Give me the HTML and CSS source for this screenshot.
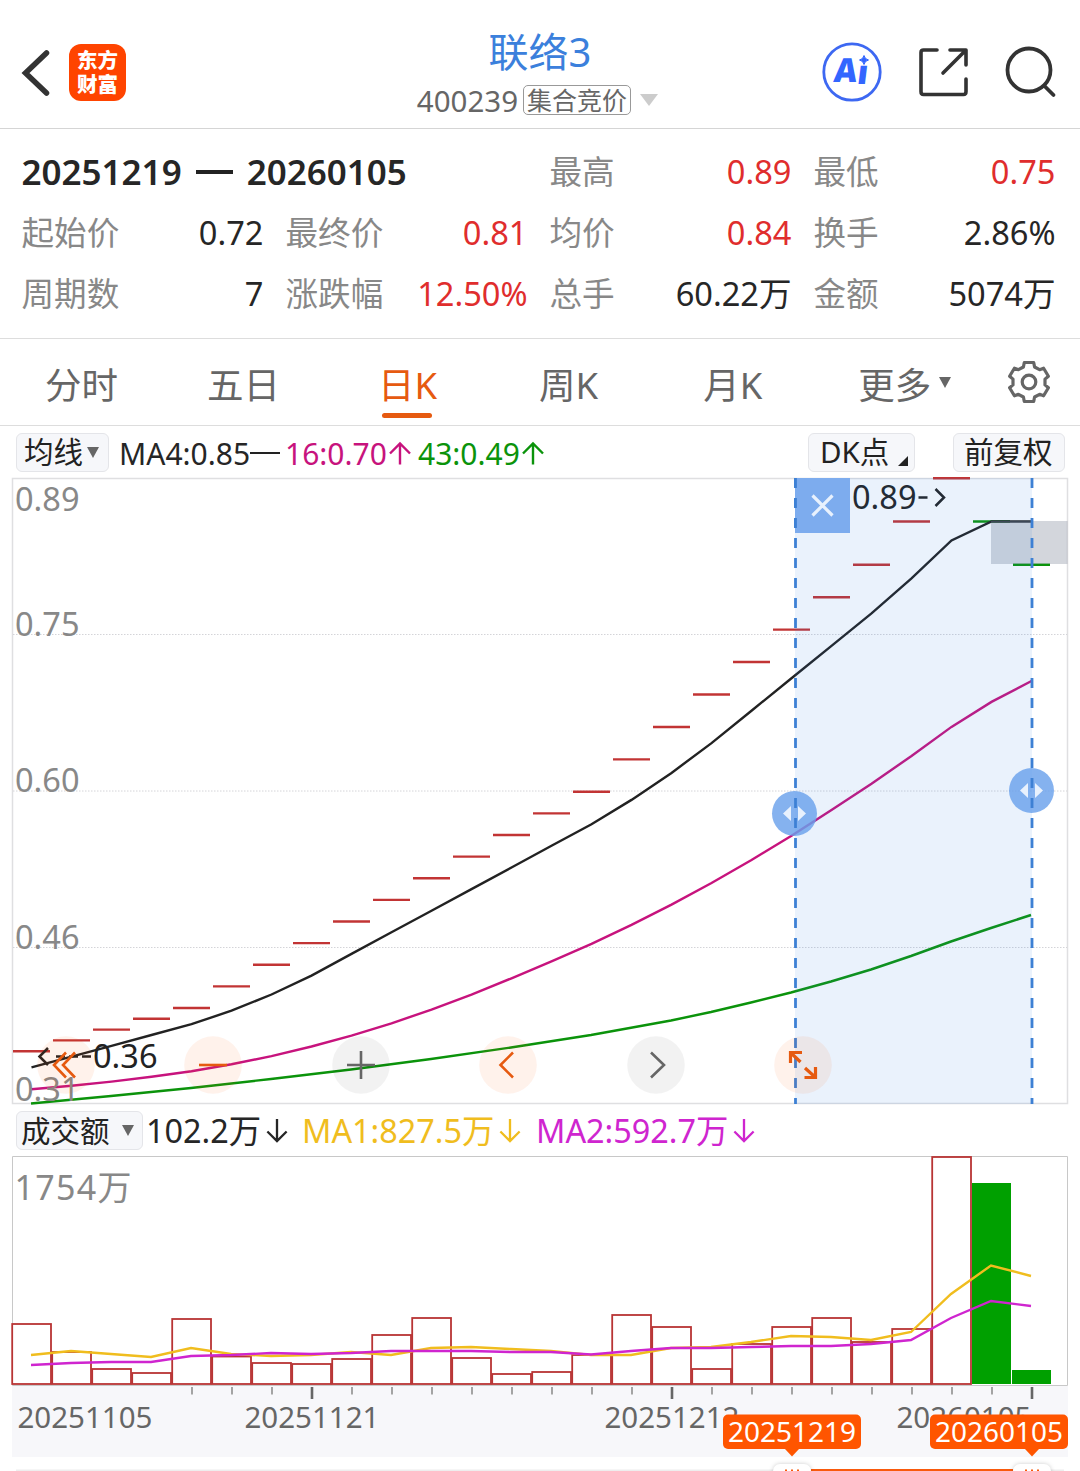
FILE: index.html
```html
<!DOCTYPE html>
<html lang="zh-CN">
<head>
    <meta charset="UTF-8">
    <meta name="viewport" content="width=device-width, initial-scale=1.0">
    <title>联络3 400239</title>
    <link rel="stylesheet" href="styles.css">
</head>
<body>
    <!-- Header -->
    <header class="header">
        <div class="header-left">
            <svg class="back" width="30" height="50" viewBox="0 0 30 50">
                <path d="M25.500 5 L4.500 25 L25.500 45" fill="none" stroke="#333" stroke-width="5.500" stroke-linecap="round"/>
            </svg>
            <div class="logo"><span>东方</span><span>财富</span></div>
        </div>
        <div class="header-title">
            <h1>联络3</h1>
            <div class="code">400239<span class="badge">集合竞价</span><i class="caret-light"></i></div>
        </div>
        <div class="header-right">
            <svg class="ai-icon" width="60" height="60" viewBox="0 0 60 60">
                <circle cx="30" cy="30" r="28.2" fill="none" stroke="#3d68f2" stroke-width="2.8"/>
                <g transform="translate(5 0) skewX(-7)">
                    <text class="ai" x="11" y="40.500" textLength="23" lengthAdjust="spacingAndGlyphs">A</text>
                    <text class="ai" x="34.500" y="42">ı</text>
                </g>
                <path d="M42 13.500 Q42.800 17.200 46.500 18 Q42.800 18.800 42 22.500 Q41.200 18.800 37.500 18 Q41.200 17.200 42 13.500Z" fill="#3366ff" stroke="#3366ff"/>
            </svg>
            <svg width="52" height="52" viewBox="0 0 52 52" fill="none" stroke="#333" stroke-width="3.600" stroke-linecap="round" stroke-linejoin="round">
                <path d="M19 4 H5.500 Q3 4 3 6.500 V45.500 Q3 48.500 5.500 48.500 H45.500 Q48 48.500 48 45.500 V33"/>
                <path d="M32 4 H48 V19 M47 5 L25 27"/>
            </svg>
            <svg width="52" height="52" viewBox="0 0 52 52" fill="none" stroke="#333" stroke-width="3.800" stroke-linecap="round">
                <circle cx="24" cy="24" r="21.500"/>
                <path d="M39.500 40 L48.500 49"/>
            </svg>
        </div>
    </header>

    <!-- Range statistics -->
    <section class="stats">
        <div class="range">20251219<i></i>20260105</div>
        <div class="stat"><span>最高</span><b class="red">0.89</b></div>
        <div class="stat"><span>最低</span><b class="red">0.75</b></div>
        <div class="stat"><span>起始价</span><b>0.72</b></div>
        <div class="stat"><span>最终价</span><b class="red">0.81</b></div>
        <div class="stat"><span>均价</span><b class="red">0.84</b></div>
        <div class="stat"><span>换手</span><b>2.86%</b></div>
        <div class="stat"><span>周期数</span><b>7</b></div>
        <div class="stat"><span>涨跌幅</span><b class="red">12.50%</b></div>
        <div class="stat"><span>总手</span><b>60.22万</b></div>
        <div class="stat"><span>金额</span><b>5074万</b></div>
    </section>

    <!-- Period tabs -->
    <nav class="tabs">
        <a>分时</a>
        <a>五日</a>
        <a class="active">日K</a>
        <a>周K</a>
        <a>月K</a>
        <a>更多<i class="caret"></i></a>
        <svg class="gear" width="46" height="46" viewBox="-23 -23 46 46" fill="none" stroke="#666" stroke-width="3.200" stroke-linejoin="round">
            <path d="M-4.700 -19.500 H4.700 L5.600 -15 L10.600 -12.300 L14.600 -13.800 L19.400 -5.800 L16 -2.900 V2.900 L19.400 5.800 L14.600 13.800 L10.600 12.300 L5.600 15 L4.700 19.500 H-4.700 L-5.600 15 L-10.600 12.300 L-14.600 13.800 L-19.400 5.800 L-16 2.900 V-2.900 L-19.400 -5.800 L-14.600 -13.800 L-10.600 -12.300 L-5.600 -15Z"/>
            <circle r="6.800"/>
        </svg>
    </nav>

    <!-- Moving averages -->
    <div class="toolbar">
        <button class="chip ma-chip">均线<i class="caret"></i></button>
        <span class="ma ma4">MA4:0.85<i class="flat"></i></span>
        <span class="ma ma16">16:0.70<svg class="arrow" viewBox="0 0 24 24"><path d="M12 23 V2 M2 12 L12 2 L22 12"/></svg></span>
        <span class="ma ma43">43:0.49<svg class="arrow" viewBox="0 0 24 24"><path d="M12 23 V2 M2 12 L12 2 L22 12"/></svg></span>
        <button class="chip dk-chip">DK点<i class="corner"></i></button>
        <button class="chip fq-chip">前复权</button>
    </div>

    <!-- Price chart -->
    <svg class="chart" width="1080" height="632" viewBox="0 474 1080 632">
        <path d="M12.500 478.500 H1067.500 V1103.500 H12.500Z" fill="none" stroke="#dfdfe1" stroke-width="1.500"/>
        <path d="M13 634.500 H1067 M13 791 H1067 M13 947.500 H1067" stroke="#d4d4d8" stroke-dasharray="1.500 1.500"/>
        <g id="candles"></g>
        <polyline id="ma4" class="line" stroke="#222"/>
        <polyline id="ma16" class="line" stroke="#c7137d"/>
        <polyline class="line" stroke="#0b930b" points="31,1103.500 111,1096 191,1088 271,1079 351,1069.500 431,1059 511,1047.500 591,1035 671,1020.500 711,1012 751,1002.500 791,992.500 831,981.500 871,969.500 911,956 951,941.500 991,928 1031,915"/>
        <g class="axis-label">
            <text x="15" y="511">0.89</text>
            <text x="15" y="636">0.75</text>
            <text x="15" y="792">0.60</text>
            <text x="15" y="949">0.46</text>
            <text x="15" y="1100.500">0.31</text>
        </g>
        <g class="mark">
            <text x="93" y="1068">0.36</text>
            <path d="M48 1048 L39.500 1056.500 L48 1065 M56 1056.500 h9 M69 1056.500 h9 M82 1056.500 h9"/>
            <text x="852" y="508.500">0.89</text>
            <path d="M918.500 497.500 h9 M935.500 489 L944 497.500 L935.500 506"/>
        </g>
        <rect x="991" y="521" width="76.500" height="43" fill="#7a8494" fill-opacity=".33"/>

        <!-- Selected range -->
        <rect x="795" y="478" width="237" height="626" fill="#2f7fdf" fill-opacity=".1"/>
        <path d="M795.500 478 V1104 M1032 478 V1104" stroke="#3d80d4" stroke-width="2.800" stroke-dasharray="10 10"/>
        <rect x="795" y="478" width="55" height="55" fill="#7dacee"/>
        <path d="M795.500 478 v10 m0 10 v10 m0 10 v10" stroke="#3d80d4" stroke-width="2.800"/>
        <path d="M812.500 495.500 L832.500 515.500 M832.500 495.500 L812.500 515.500" stroke="#e8f1fd" stroke-width="3.200"/>
        <g class="handle">
            <circle cx="794.500" cy="813.500" r="22.500"/>
            <path d="M791 806 V821 L783 813.500Z M798 806 V821 L806 813.500Z"/>
            <circle cx="1031.500" cy="790.500" r="22.500"/>
            <path d="M1028 783 V798 L1020 790.500Z M1035 783 V798 L1043 790.500Z"/>
        </g>
        <path d="M795.500 798 v10 m0 10 v10 M1032 778 v10 m0 10 v10" stroke="#3d80d4" stroke-width="2.600"/>

        <!-- Zoom and scroll buttons -->
        <g class="ctrl hot">
            <circle cx="66" cy="1065" r="28.800"/>
            <path d="M66 1052.500 L54 1065 L66 1077.500 M75 1052.500 L63 1065 L75 1077.500"/>
            <circle cx="213" cy="1065" r="28.800"/>
            <path d="M199 1065 h28"/>
            <circle cx="508" cy="1065" r="28.800"/>
            <path d="M513 1052.500 L500.500 1065 L513 1077.500"/>
            <circle cx="803" cy="1065" r="28.800"/>
            <path class="expand" d="M802 1052.500 H790.500 V1063 M791 1053 L800.500 1062 M805 1068 L815 1077 M815.500 1067 V1077.500 H804.500"/>
        </g>
        <g class="ctrl">
            <circle cx="361" cy="1065" r="28.800"/>
            <path d="M347 1065 h28 M361 1051 v28"/>
            <circle cx="656" cy="1065" r="28.800"/>
            <path d="M651 1052.500 L664 1065 L651 1077.500"/>
        </g>
    </svg>

    <!-- Turnover -->
    <div class="toolbar volume-bar">
        <button class="chip vol-chip">成交额<i class="caret"></i></button>
        <span class="vol">102.2万<svg class="arrow" viewBox="0 0 24 26"><path d="M12 1 V24 M2 14 L12 24 L22 14"/></svg></span>
        <span class="vol vol-ma1">MA1:827.5万<svg class="arrow" viewBox="0 0 24 26"><path d="M12 1 V24 M2 14 L12 24 L22 14"/></svg></span>
        <span class="vol vol-ma2">MA2:592.7万<svg class="arrow" viewBox="0 0 24 26"><path d="M12 1 V24 M2 14 L12 24 L22 14"/></svg></span>
    </div>

    <svg class="chart" width="1080" height="317" viewBox="0 1154 1080 317">
        <rect x="12" y="1386" width="1056" height="71" fill="#f7f7fa"/>
        <path d="M12.500 1156.500 H1067.500 V1385.500 H12.500Z" fill="#fff" stroke="#c8c8c8"/>
        <text class="axis-label volume-max" x="14.500" y="1200">1754万</text>
        <g id="bars"></g>
        <polyline class="line" stroke="#f0bd1e" points="31,1355 71,1351 111,1354 151,1357 191,1348 231,1354 271,1356 311,1355 351,1352 391,1355 431,1348 471,1347 511,1349 551,1351 591,1355 631,1355 671,1348 711,1347 751,1342 791,1336 831,1337 871,1340 911,1332 951,1294 991,1265.500 1031,1276"/>
        <polyline class="line" stroke="#cf25cf" points="31,1365 71,1363 111,1362 151,1362 191,1356 231,1355 271,1353 311,1354 351,1353 391,1351 431,1351 471,1351 511,1352 551,1352 591,1354.500 631,1351 671,1348 711,1348 751,1347 791,1346 831,1346 871,1344 911,1340 951,1318 991,1301 1031,1306"/>
        <g id="ticks"></g>
        <g class="date">
            <text x="17.500" y="1427.500">20251105</text>
            <text x="244.500" y="1427.500">20251121</text>
            <text x="604.500" y="1427.500">20251212</text>
            <text x="896.500" y="1427.500">20260105</text>
        </g>

        <!-- Range slider -->
        <path d="M16 1470.500 H1064" stroke="#eee" stroke-width="2"/>
        <path d="M811 1470.500 H1013" stroke="#f95a0d" stroke-width="3"/>
        <g class="grip">
            <rect x="773" y="1464" width="38" height="20" rx="7"/>
            <rect x="1013" y="1464" width="38" height="20" rx="7"/>
        </g>
        <path d="M786 1469.500 v2 M792 1469.500 v2 M798 1469.500 v2 M1026 1469.500 v2 M1032 1469.500 v2 M1038 1469.500 v2" stroke="#f95a0d" stroke-width="2"/>
        <g class="flag">
            <rect x="723" y="1414.500" width="138" height="34.500" rx="5"/>
            <path d="M785 1449 H799 L792 1456.500Z"/>
            <text x="728" y="1441.500">20251219</text>
            <rect x="930" y="1414.500" width="138" height="34.500" rx="5"/>
            <path d="M1025 1449 H1039 L1032 1456.500Z"/>
            <text x="935" y="1441.500">20260105</text>
        </g>
    </svg>

    <script>
        // Prices before the first visible day are only used for the averages
        const history = Array(12).fill(0.318).concat([0.33, 0.34, 0.35]);
        const prices = [
            0.36, 0.37, 0.38, 0.39, 0.40, 0.42, 0.44, 0.46, 0.48, 0.50, 0.52, 0.54, 0.56,
            0.58, 0.60, 0.63, 0.66, 0.69, 0.72, 0.75, 0.78, 0.81, 0.85, 0.89, 0.85, 0.81
        ];
        // Top edge of each turnover bar
        const volumes = [
            1324, 1352, 1369, 1373, 1319, 1356.5, 1363, 1364, 1359, 1335, 1318, 1358, 1374,
            1372, 1355, 1315, 1327, 1369, 1344, 1327, 1318, 1342, 1329, 1157, 1183, 1370
        ];
        const all = history.concat(prices);

        function priceY(p) {
            return 478.3 + (0.89 - p) * 1081;
        }

        function average(n) {
            return prices.map((_, i) => {
                const end = i + history.length + 1;
                const sum = all.slice(end - n, end).reduce((a, b) => a + b, 0);
                return `${31.5 + i * 40},${priceY(sum / n).toFixed(1)}`;
            }).join(' ');
        }

        document.getElementById('ma4').setAttribute('points', average(4));
        document.getElementById('ma16').setAttribute('points', average(16));

        document.getElementById('candles').innerHTML = prices.map((p, i) => {
            const color = i > 23 ? '#0b930b' : '#c23434';
            return `<path d="M${13 + i * 40} ${priceY(p)} h37" stroke="${color}" stroke-width="2.4"/>`;
        }).join('');

        document.getElementById('bars').innerHTML = volumes.map((y, i) => {
            const x = 12 + i * 40;
            if (i > 23) {
                return `<rect x="${x}" y="${y}" width="39" height="${1384 - y}" fill="#00a000"/>`;
            }
            return `<rect x="${x + 0.2}" y="${y}" width="38.800" height="${1384 - y}" fill="none" stroke="#b83434" stroke-width="1.800"/>`;
        }).join('');

        let ticks = '';
        for (let i = 4; i < 26; i++) {
            const major = i === 7 || i === 16 || i === 25;
            ticks += `<path d="M${32 + i * 40} 1387 v${major ? 12 : 7.5}" stroke="${major ? '#666' : '#999'}" stroke-width="${major ? 2.6 : 1.8}"/>`;
        }
        document.getElementById('ticks').innerHTML = ticks;
    </script>
</body>
</html>
```

FILE: styles.css
```css
/* General styles */
* {
    box-sizing: border-box;
}

body {
    margin: 0;
    width: 1080px;
    height: 1471px;
    overflow: hidden;
    background-color: #fff;
    color: #262626;
    font-family: "Noto Sans", "Noto Sans CJK SC", sans-serif;
}

.red {
    color: #e02d2d;
}

/* Header */
.header {
    display: grid;
    grid-template-columns: 300px 1fr 300px;
    height: 129px;
    border-bottom: 1px solid #d5d5d5;
}

.header-left {
    display: flex;
    align-items: center;
    gap: 18px;
    height: 145px;
    padding-left: 21px;
}

.logo {
    display: flex;
    flex-direction: column;
    align-items: center;
    justify-content: center;
    width: 57px;
    height: 57px;
    padding-bottom: 2px;
    border-radius: 12px;
    background-color: #ff4400;
    color: #fff;
    font-size: 20.5px;
    font-weight: 900;
    line-height: 24px;
}

.header-title {
    display: flex;
    flex-direction: column;
    align-items: center;
    padding-top: 27px;
}

.header-title h1 {
    margin: 0;
    color: #3b80dc;
    font-size: 40px;
    font-weight: 400;
    line-height: 50px;
}

.code {
    display: flex;
    align-items: center;
    height: 48px;
    margin: -1px 0 0 -5px;
    color: #666;
    font-size: 29.5px;
}

.badge {
    height: 30px;
    margin-left: 5px;
    padding: 0 3px;
    border: 1.5px solid #999;
    border-radius: 5px;
    font-size: 25px;
    line-height: 28px;
}

.caret-light {
    margin-left: 9px;
    border: 9.5px solid transparent;
    border-top: 12px solid #ccc;
    border-bottom: 0;
}

.header-right {
    display: flex;
    align-items: center;
    justify-content: flex-end;
    gap: 35px;
    height: 144px;
    padding-right: 23px;
}

.ai-icon {
    margin-right: 1px;
}

.ai {
    fill: #3366ff;
    font-size: 33px;
    font-weight: 900;
}

/* Range statistics */
.stats {
    display: grid;
    grid-template-columns: repeat(4, 242px);
    grid-auto-rows: 61px;
    column-gap: 22px;
    height: 210px;
    padding: 12px 0 0 21.5px;
    border-bottom: 1px solid #ddd;
    line-height: 61px;
}

.range {
    display: flex;
    align-items: center;
    grid-column: span 2;
    font-size: 35px;
    font-weight: 600;
}

.range i {
    width: 37px;
    height: 3.5px;
    margin: 1px 14px 0 14px;
    background-color: #222;
}

.stat {
    display: flex;
    justify-content: space-between;
    font-size: 32.6px;
}

.stat span {
    color: #888;
}

.stat b {
    font-weight: 400;
}

/* Period tabs */
.tabs {
    display: flex;
    align-items: center;
    height: 87px;
    padding: 0 0 0 45px;
    border-bottom: 1px solid #ddd;
    color: #666;
    font-size: 36.5px;
    line-height: 86px;
}

.tabs a {
    position: relative;
    margin-right: 89px;
    padding-top: 6px;
    line-height: 80px;
}

.tabs a:nth-child(2) {
    margin-right: 98px;
}

.tabs a:nth-child(3) {
    margin-right: 102px;
}

.tabs a:nth-child(4) {
    margin-right: 105px;
}

.tabs a:nth-child(5) {
    margin-right: 96px;
}

.tabs a:nth-child(6) {
    display: flex;
    align-items: center;
    margin-right: 55px;
}

.tabs .active {
    color: #e65a10;
}

.tabs .active::after {
    content: "";
    position: absolute;
    left: 4px;
    bottom: 7px;
    width: 50px;
    height: 5px;
    border-radius: 3px;
    background-color: #e65a10;
}

.caret {
    border: 6.5px solid transparent;
    border-top: 11px solid #666;
    border-bottom: 0;
}

.tabs .caret {
    margin: -6px 0 0 8px;
}

/* Indicator rows */
.toolbar {
    display: flex;
    align-items: center;
    height: 48px;
    padding: 4px 15px 0 16px;
    font-size: 30px;
}

.chip {
    display: flex;
    align-items: center;
    height: 39px;
    padding: 0 8px;
    border: 1.5px solid #e4e5e9;
    border-radius: 6px;
    background-color: #f6f7fa;
    color: #222;
    font-family: inherit;
    font-size: 29.5px;
    line-height: 36px;
    white-space: nowrap;
}

.ma-chip {
    width: 93px;
    padding-left: 7px;
}

.ma-chip .caret {
    margin-left: 4px;
}

.ma,
.vol {
    display: flex;
    align-items: center;
    padding-top: 2px;
    white-space: nowrap;
}

.ma4 {
    width: 175px;
    margin-left: 1px;
    padding-left: 9px;
}

.ma16 {
    width: 133px;
    color: #c7137d;
}

.ma43 {
    color: #0b930b;
}

.flat {
    width: 30px;
    height: 2.5px;
    background-color: #222;
}

.arrow {
    width: 24px;
    height: 25px;
    margin-left: 1px;
    fill: none;
    stroke: currentColor;
    stroke-width: 2.4;
}

.dk-chip {
    width: 107px;
    margin-left: auto;
    padding-left: 11px;
}

.corner {
    align-self: flex-end;
    margin: 0 0 5px 9px;
    border-left: 10px solid transparent;
    border-bottom: 10px solid #222;
}

.fq-chip {
    width: 112px;
    margin-left: 38px;
    padding-left: 10px;
}

.volume-bar {
    padding-top: 1px;
    font-size: 32.4px;
}

.vol-chip {
    width: 127px;
    padding-left: 4px;
}

.vol-chip .caret {
    margin-left: 12px;
}

.vol {
    width: 156px;
    padding: 0 0 4px 3px;
}

.vol .arrow {
    margin: 3px 0 0 4px;
}

.vol-ma1 {
    width: 234px;
    color: #f0bd1e;
}

.vol-ma2 {
    width: 234px;
    color: #cf25cf;
}

/* Charts */
.chart {
    display: block;
}

.line {
    fill: none;
    stroke-width: 2.4;
}

.axis-label {
    fill: #888;
    font-size: 32.5px;
}

.volume-max {
    font-size: 34px;
    letter-spacing: 1.3px;
}

.mark text {
    fill: #222;
    font-size: 32.5px;
}

.mark path {
    fill: none;
    stroke: #222;
    stroke-width: 2.5;
}

.handle circle {
    fill: #6aa1eb;
    fill-opacity: 0.82;
}

.handle path {
    fill: #e8f1fd;
}

.ctrl circle {
    fill: #000;
    fill-opacity: 0.05;
}

.ctrl path {
    fill: none;
    stroke: #666;
    stroke-width: 2.6;
}

.hot circle {
    fill: #ff5a00;
    fill-opacity: 0.08;
}

.hot path {
    stroke: #e65a10;
}

.hot .expand {
    stroke-width: 3.2;
}

.date {
    fill: #666;
    font-size: 29.5px;
}

.grip rect {
    fill: #fff;
    filter: drop-shadow(0 0 2px rgba(0, 0, 0, 0.2));
}

.flag {
    fill: #ff5500;
}

.flag text {
    fill: #fff;
    font-size: 28px;
}
```
